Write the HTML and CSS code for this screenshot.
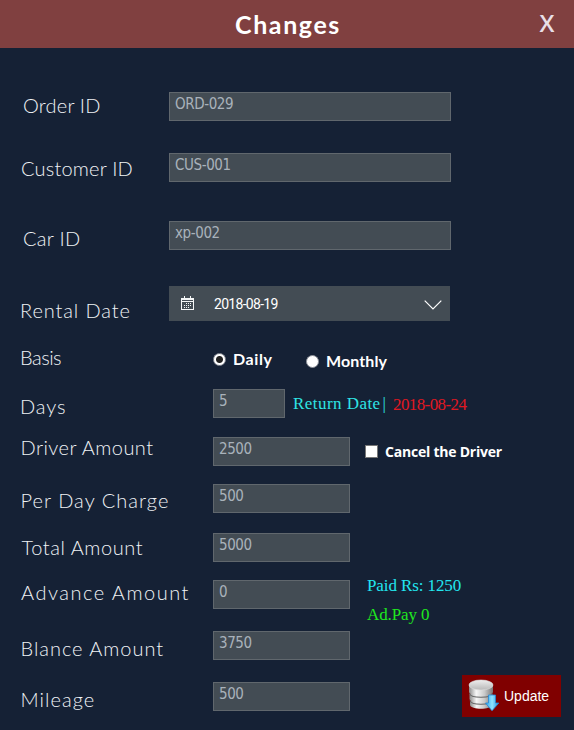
FILE: index.html
```
<!DOCTYPE html>
<html lang="en">
<head>
<meta charset="utf-8">
<title>Changes</title>
<link rel="stylesheet" href="styles.css">
</head>
<body>
<header class="titlebar">
  <h1 class="title">Changes</h1>
  <span class="close">X</span>
</header>
<main class="form">
  <div class="row wide"><span class="label order">Order ID</span><div class="field">ORD-029</div></div>
  <div class="row wide"><span class="label customer">Customer ID</span><div class="field">CUS-001</div></div>
  <div class="row wide"><span class="label car">Car ID</span><div class="field">xp-002</div></div>
  <div class="row wide">
    <span class="label rental">Rental Date</span>
    <div class="datepicker">
      <svg class="calendar" width="14" height="15" viewBox="0 0 14 15" shape-rendering="crispEdges">
        <path d="M.5 2.5h12v11H.5zM.5 5.5h12M.5 3.5h12M3.5 0v3M9.5 0v3" fill="none" stroke="#f4f6f7"/>
        <path d="M5 7h1v1H5zM7 7h1v1H7zM9 7h1v1H9zM3 9h1v1H3zM5 9h1v1H5zM7 9h1v1H7zM9 9h1v1H9zM3 11h1v1H3zM5 11h1v1H5zM7 11h1v1H7z" fill="#f4f6f7"/>
      </svg>
      <span class="date">2018-08-19</span>
      <svg class="chevron" width="18" height="10" viewBox="0 0 18 10"><path d="M.7.7 9 9 17.3.7" fill="none" stroke="#fff" stroke-width="1.2"/></svg>
    </div>
  </div>
  <div class="row">
    <span class="label basis">Basis</span>
    <div class="option daily"><i class="radio checked"></i>Daily</div>
    <div class="option monthly"><i class="radio"></i>Monthly</div>
  </div>
  <div class="row">
    <span class="label days">Days</span><div class="field short">5</div>
    <span class="return">Return Date<span class="bar">|</span></span><span class="return-date">2018-08-24</span>
  </div>
  <div class="row">
    <span class="label driver">Driver Amount</span><div class="field">2500</div>
    <div class="cancel"><i class="checkbox"></i>Cancel the Driver</div>
  </div>
  <div class="row"><span class="label perday">Per Day Charge</span><div class="field">500</div></div>
  <div class="row"><span class="label total">Total Amount</span><div class="field">5000</div></div>
  <div class="row">
    <span class="label advance">Advance Amount</span><div class="field">0</div>
    <div class="payments"><div class="paid">Paid Rs: 1250</div><div class="adpay">Ad.Pay 0</div></div>
  </div>
  <div class="row"><span class="label balance">Blance Amount</span><div class="field">3750</div></div>
  <div class="row">
    <span class="label mileage">Mileage</span><div class="field">500</div>
    <div class="update">
      <svg class="database" width="32" height="34" viewBox="0 0 32 34">
        <defs>
          <linearGradient id="metal"><stop offset="0" stop-color="#8b8b8b"/><stop offset=".3" stop-color="#f7f7f7"/><stop offset=".65" stop-color="#c9c9c9"/><stop offset="1" stop-color="#777"/></linearGradient>
          <linearGradient id="lid" x2="0" y2="1"><stop offset="0" stop-color="#eee"/><stop offset="1" stop-color="#b8b8b8"/></linearGradient>
          <linearGradient id="arrow"><stop offset="0" stop-color="#2aa4ee"/><stop offset=".5" stop-color="#8fe4ff"/><stop offset="1" stop-color="#1e8fe0"/></linearGradient>
        </defs>
        <path d="M2 22v4c1 5 21 5 22 0v-4z" fill="url(#metal)"/>
        <path d="M2 21.500c1 5 21 5 22 0" fill="none" stroke="#666" stroke-width="1.200"/>
        <path d="M1.500 15v5c1 5 22 5 23 0v-5z" fill="url(#metal)"/>
        <path d="M1.500 14.500c1 5 22 5 23 0" fill="none" stroke="#666" stroke-width="1.200"/>
        <path d="M1 6v7c1 5.300 23 5.300 24 0V6z" fill="url(#metal)"/>
        <ellipse cx="13" cy="6" rx="12" ry="5" fill="url(#lid)" stroke="#ddd" stroke-width=".6"/>
        <path d="M20.500 16h7v8h3.300L24 31.800 17.500 24h3z" fill="url(#arrow)" stroke="#2488d8" stroke-width=".8"/>
      </svg>
      <span>Update</span>
    </div>
  </div>
</main>
</body>
</html>
```
FILE: styles.css
```
* { box-sizing: border-box; }
body { margin: 0; width: 574px; height: 730px; overflow: hidden; background: #152135; color: #fff; font-family: Lato, sans-serif; }
.titlebar { display: grid; grid-template-columns: 60px 1fr 60px; height: 48px; background: #804040; }
.title { grid-column: 2; margin: 0; padding-left: 2px; text-align: center; font-size: 25px; font-weight: 700; line-height: 49px; letter-spacing: 1.6px; }
.close { padding-left: 25.5px; font: 600 24px/46px "Open Sans", sans-serif; color: #e8dfe6; }

.form { display: grid; grid-template-rows: 61px 68px 65px 59px 44px 48px 47px 49px 47px 51px 51px 48px; padding-top: 44px; }
.row { display: flex; align-items: flex-start; white-space: nowrap; }
.label { flex: none; width: 213px; padding-left: 20px; font-size: 20px; font-weight: 300; line-height: 28px; color: #f0f3f6; }
.wide .label { width: 169px; }
.wide .order { padding-left: 23px; margin-top: -1px; letter-spacing: .2px; }
.wide .customer { padding-left: 21px; margin-top: 1px; letter-spacing: .2px; }
.wide .car { padding-left: 23px; margin-top: 3px; letter-spacing: .3px; }
.rental { margin-top: 10px; letter-spacing: .9px; }
.basis { margin-top: -2px; letter-spacing: -.5px; }
.days { margin-top: 3px; letter-spacing: .9px; }
.driver { padding-left: 20.5px; margin-top: -4px; letter-spacing: .45px; }
.perday { padding-left: 20.5px; margin-top: 2px; letter-spacing: 1.05px; }
.total { padding-left: 21.5px; letter-spacing: .57px; }
.advance { padding-left: 21px; margin-top: -2px; letter-spacing: 1.5px; }
.balance { padding-left: 20.5px; margin-top: 3px; letter-spacing: .97px; }
.mileage { padding-left: 20.5px; margin-top: 3px; letter-spacing: 1.05px; }

.field { flex: none; width: 137px; height: 29px; padding-left: 5px; border: 1px solid #60676d; background: #434c54; color: #a9b2bb; font: 15px/22px "DejaVu Sans Condensed", "DejaVu Sans", sans-serif; letter-spacing: -.4px; }
.wide .field { width: 282px; }
.field.short { width: 72px; }

.datepicker { display: flex; align-items: center; width: 281px; height: 35px; padding: 0 8px 0 12px; background: #434c54; }
.calendar { margin-right: 19px; }
.date { padding-top: 1px; font: 14px/35px Roboto, sans-serif; letter-spacing: -.7px; }
.chevron { margin-left: auto; margin-top: 2px; }

.option { display: flex; align-items: center; font-size: 16px; font-weight: 700; line-height: 28px; }
.radio { width: 13px; height: 13px; margin-right: 7px; border: 1px solid #8c9099; border-radius: 50%; background: #fff; }
.checked { background: radial-gradient(circle, #222 3px, #fff 4px); }
.daily { width: 93px; letter-spacing: .6px; }
.monthly { margin-top: 2px; letter-spacing: .1px; }

.return { width: 100px; margin-left: 8px; font: 17px/30px "Liberation Serif", serif; letter-spacing: .45px; color: #2fe4e4; }
.bar { margin-left: 2px; }
.return-date { font: 17px/31px "Liberation Serif", serif; letter-spacing: -.6px; color: #e01822; }
.cancel { display: flex; align-items: center; margin-left: 15px; font: 700 14px/29px "Open Sans", sans-serif; letter-spacing: -.22px; }
.checkbox { width: 13px; height: 13px; margin-right: 7px; border: 1px solid #777; background: #fff; }
.payments { margin: -9px 0 0 17px; font: 17px/29px "Liberation Serif", serif; letter-spacing: -.1px; }
.paid { color: #22e6f0; }
.adpay { color: #1fe81f; }

.update { display: flex; align-items: center; width: 99px; height: 42px; margin: -7px 13px 0 auto; padding-left: 6px; background: #800000; font: 14px/42px "Liberation Sans", sans-serif; }
.database { margin: 0 4px 0 0; }
```
